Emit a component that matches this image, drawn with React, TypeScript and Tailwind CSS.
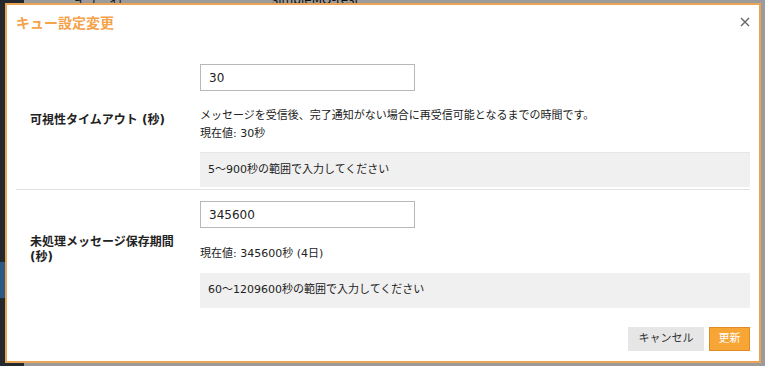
import React from "react";

const font = { fontFamily: '"DejaVu Sans", "Noto Sans CJK JP", "Noto Sans", sans-serif' };
const titleFont = { fontFamily: '"Noto Sans CJK JP", "Noto Sans", sans-serif' };

export default function App() {
  return (
    <div className="relative w-[765px] h-[366px] overflow-hidden bg-[#9a9a9a]" style={font}>
      {/* background page (dimmed by backdrop) */}
      <div className="absolute inset-0 flex">
        <div className="w-[24px] h-full bg-[#23292d] flex flex-col">
          <div className="h-[262px]" />
          <div className="h-[36px] bg-[#2c5a86]" />
        </div>
        <div className="flex-1 h-full bg-[#9b9b9b] relative">
          <div className="absolute top-[-9px] left-[50px] text-[12px] text-[#111] flex gap-[150px]">
            <span>キュー名</span>
            <span>simpleMQ-test</span>
          </div>
        </div>
      </div>

      {/* dialog */}
      <div className="absolute left-[5px] top-[3px] w-[756px] h-[360px] bg-white border-2 border-[#eba355] flex flex-col">
        <div className="flex items-center justify-between pl-[9px] pr-[9px] h-[34px]">
          <h2 className="text-[14px] font-bold text-[#f5a24a] leading-none" style={titleFont}>キュー設定変更</h2>
          <svg width="10" height="10" viewBox="0 0 10 10" className="mb-[1px]">
            <path d="M1 1L9 9M9 1L1 9" stroke="#666" strokeWidth="1.4" />
          </svg>
        </div>

        <div className="px-[9px] pt-[25px]">
          {/* row 1 */}
          <div className="flex border-b border-[#e2e2e2] pb-[2px]">
            <div className="w-[184px] flex items-center pl-[14px] pr-[14px] pb-[10px]">
              <span className="text-[12px] font-bold text-[#222] leading-[15px]">可視性タイムアウト (秒)</span>
            </div>
            <div className="flex-1 flex flex-col">
              <div className="w-[215px] h-[27px] border border-[#b8b8b8] flex items-center px-[8px] text-[12px] text-[#222]">30</div>
              <div className="mt-[16px] text-[11px] leading-[18px] text-[#222]">
                <div>メッセージを受信後、完了通知がない場合に再受信可能となるまでの時間です。</div>
                <div>現在値: 30秒</div>
              </div>
              <div className="mt-[9px] h-[35px] bg-[#f0f0f0] border-t border-[#e6e6e6] flex items-center px-[8px] text-[11px] text-[#222]">
                5～900秒の範囲で入力してください
              </div>
            </div>
          </div>

          {/* row 2 */}
          <div className="flex pt-[11px]">
            <div className="w-[184px] flex items-center pl-[14px] pr-[14px] pb-[10px]">
              <span className="text-[12px] font-bold text-[#222] leading-[15px]">未処理メッセージ保存期間 (秒)</span>
            </div>
            <div className="flex-1 flex flex-col">
              <div className="w-[215px] h-[27px] border border-[#b8b8b8] flex items-center px-[8px] text-[12px] text-[#222]">345600</div>
              <div className="mt-[17px] text-[11px] leading-[18px] text-[#222]">
                <div>現在値: 345600秒 (4日)</div>
              </div>
              <div className="mt-[10px] h-[35px] bg-[#f0f0f0] flex items-center px-[8px] text-[11px] text-[#222]">
                60～1209600秒の範囲で入力してください
              </div>
            </div>
          </div>
        </div>

        <div className="flex justify-end gap-[5px] pr-[9px] mt-[19px]">
          <button className="w-[76px] h-[24px] bg-[#e6e6e6] text-[11px] text-[#333]">キャンセル</button>
          <button className="w-[41px] h-[24px] bg-[#f7a535] border border-[#e08b25] text-[11px] text-white">更新</button>
        </div>
      </div>
    </div>
  );
}
